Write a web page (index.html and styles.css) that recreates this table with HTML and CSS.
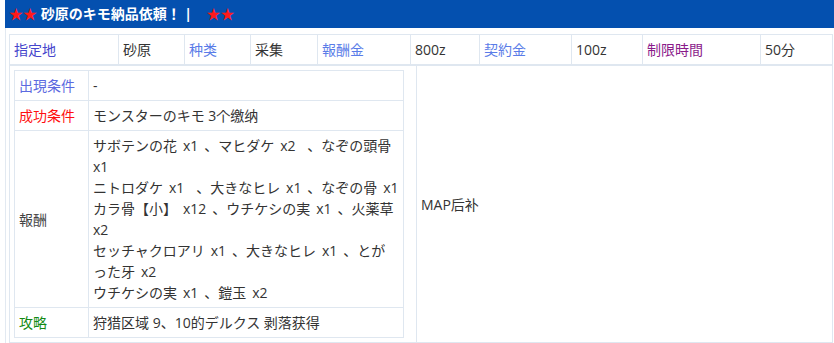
FILE: index.html
```html
<!DOCTYPE html>
<html lang="ja">
<head>
<meta charset="utf-8">
<title>砂原のキモ納品依頼！</title>
<link rel="stylesheet" href="styles.css">
</head>
<body>
<div class="page">
  <div class="title"><span class="stars">★★</span> 砂原のキモ納品依頼！ |&nbsp;&nbsp;&nbsp;&nbsp;<span class="stars">★★</span></div>
  <div class="body">
    <div class="info-row">
      <div class="cell lbl-place">指定地</div>
      <div class="cell">砂原</div>
      <div class="cell lbl-blue">种类</div>
      <div class="cell">采集</div>
      <div class="cell lbl-blue">報酬金</div>
      <div class="cell">800z</div>
      <div class="cell lbl-blue">契約金</div>
      <div class="cell">100z</div>
      <div class="cell lbl-purple">制限時間</div>
      <div class="cell">50分</div>
    </div>
    <div class="detail-row">
      <div class="detail-cell">
        <div class="cond-table">
          <div class="ccell lbl-appear">出現条件</div>
          <div class="ccell">-</div>
          <div class="ccell lbl-red">成功条件</div>
          <div class="ccell">モンスターのキモ 3个缴纳</div>
          <div class="ccell lbl-dark">報酬</div>
          <div class="ccell reward">サボテンの花 x1 、マヒダケ x2 &nbsp;、なぞの頭骨<br>x1<br>ニトロダケ x1 &nbsp;、大きなヒレ x1 、なぞの骨 x1<br>カラ骨【小】 x12 、ウチケシの実 x1 、火薬草<br>x2<br>セッチャクロアリ x1 、大きなヒレ x1 、とが<br>った牙 x2<br>ウチケシの実 x1 、鎧玉 x2</div>
          <div class="ccell lbl-green">攻略</div>
          <div class="ccell">狩猎区域 9、10的デルクス 剥落获得</div>
        </div>
      </div>
      <div class="map-cell">MAP后补</div>
    </div>
  </div>
</div>
</body>
</html>
```
FILE: styles.css
```css
html, body {
  margin: 0;
  padding: 0;
  background: #ffffff;
}
body {
  font-family: "Open Sans", "Noto Sans CJK SC", "Noto Sans CJK JP", sans-serif;
  font-size: 14px;
  color: #333333;
}
.page {
  margin-left: 5px;
}
.title {
  height: 28px;
  line-height: 28px;
  background: #0450af;
  color: #ffffff;
  font-weight: bold;
  padding-left: 4px;
  white-space: nowrap;
  overflow: hidden;
}
.stars {
  color: #ff1a1a;
  font-weight: normal;
}
.body {
  border-left: 1px solid #e2e9f1;
  padding: 6px 1px 0 3px;
}
.info-row {
  display: grid;
  grid-template-columns: 109px 66px 66px 67px 93px 69px 92px 71px 118px 1fr;
  border-top: 1px solid #dfe7f0;
  border-left: 1px solid #dfe7f0;
}
.cell {
  padding: 4px;
  line-height: 21px;
  border-right: 1px solid #dfe7f0;
  border-bottom: 1px solid #dfe7f0;
  white-space: nowrap;
}
.detail-row {
  display: grid;
  grid-template-columns: 407px 1fr;
  border-top: 1px solid #dfe7f0;
  border-left: 1px solid #dfe7f0;
}
.detail-cell {
  padding: 4px;
  border-right: 1px solid #dfe7f0;
  border-bottom: 1px solid #dfe7f0;
}
.map-cell {
  display: flex;
  align-items: center;
  padding: 4px;
  line-height: 21px;
  border-right: 1px solid #dfe7f0;
  border-bottom: 1px solid #dfe7f0;
}
.cond-table {
  width: 390px;
  box-sizing: border-box;
  display: grid;
  grid-template-columns: 74px 1fr;
  border-top: 1px solid #dfe7f0;
  border-left: 1px solid #dfe7f0;
}
.ccell {
  display: flex;
  align-items: center;
  padding: 4px;
  line-height: 21px;
  border-right: 1px solid #dfe7f0;
  border-bottom: 1px solid #dfe7f0;
  white-space: nowrap;
}
.reward {
  display: block;
  word-spacing: 2.3px;
}
.lbl-place { color: #4646cc; }
.lbl-blue { color: #5a7ce8; }
.lbl-purple { color: #8a1a8a; }
.lbl-appear { color: #5c6ae0; }
.lbl-red { color: #ff1010; }
.lbl-dark { color: #444444; }
.lbl-green { color: #138a13; }
```
